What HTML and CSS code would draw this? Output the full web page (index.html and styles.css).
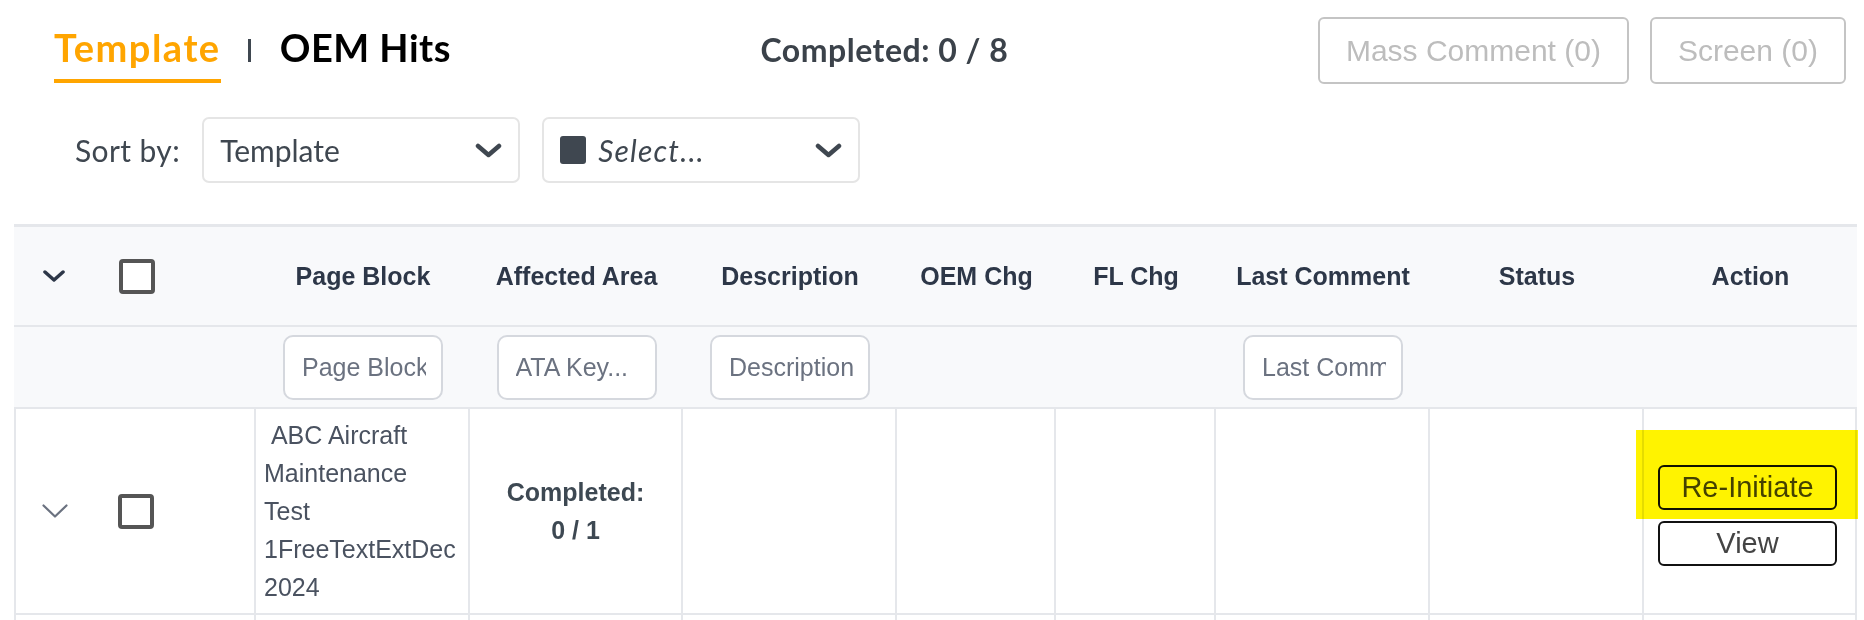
FILE: index.html
```html
<!DOCTYPE html>
<html lang="en">
<head>
<meta charset="utf-8">
<title>Template review</title>
<link rel="stylesheet" href="styles.css">
</head>
<body>
<div class="page">
  <header class="topbar">
    <nav class="tabs">
      <span class="tab tab-active">Template</span>
      <span class="tab-sep" aria-hidden="true"></span>
      <span class="tab tab-plain">OEM Hits</span>
    </nav>
    <div class="progress">Completed: 0 / 8</div>
    <div class="top-actions">
      <button class="btn-ghost" type="button" disabled>Mass Comment (0)</button>
      <button class="btn-ghost" type="button" disabled>Screen (0)</button>
    </div>
  </header>

  <div class="sortbar">
    <span class="sort-label">Sort by:</span>
    <div class="select">
      <span class="select-value">Template</span>
      <svg class="select-caret" viewBox="0 0 27 15" width="27" height="15"><polyline points="3,3 13.5,12 24,3"/></svg>
    </div>
    <div class="select">
      <span class="select-swatch"></span>
      <span class="select-placeholder">Select...</span>
      <svg class="select-caret" viewBox="0 0 27 15" width="27" height="15"><polyline points="3,3 13.5,12 24,3"/></svg>
    </div>
  </div>

  <table class="grid">
    <colgroup>
      <col class="c-ctl">
      <col class="c-wide">
      <col class="c-wide2">
      <col class="c-wide">
      <col class="c-narrow">
      <col class="c-narrow2">
      <col class="c-wide">
      <col class="c-wide">
      <col class="c-wide2">
    </colgroup>
    <thead>
      <tr class="head-row">
        <th class="ctl-head">
          <div class="ctl">
            <svg class="chev-head" viewBox="0 0 22 12" width="22" height="12"><polyline points="2,2 11,10 20,2"/></svg>
            <span class="check"></span>
          </div>
        </th>
        <th>Page Block</th>
        <th>Affected Area</th>
        <th>Description</th>
        <th>OEM Chg</th>
        <th>FL Chg</th>
        <th>Last Comment</th>
        <th>Status</th>
        <th>Action</th>
      </tr>
      <tr class="filter-row">
        <th></th>
        <th><input class="filter" type="text" placeholder="Page Block"></th>
        <th><input class="filter" type="text" placeholder="ATA Key..."></th>
        <th><input class="filter" type="text" placeholder="Description"></th>
        <th></th>
        <th></th>
        <th><input class="filter" type="text" placeholder="Last Comment"></th>
        <th></th>
        <th></th>
      </tr>
    </thead>
    <tbody>
      <tr>
        <td class="ctl-cell">
          <div class="ctl ctl-row">
            <svg class="chev-row" viewBox="0 0 26 14" width="26" height="14"><polyline points="1.5,1.5 13,12.5 24.5,1.5"/></svg>
            <span class="check"></span>
          </div>
        </td>
        <td class="cell-text">&nbsp;ABC Aircraft Maintenance Test 1FreeTextExtDec 2024</td>
        <td class="cell-progress">Completed:<br>0 / 1</td>
        <td></td>
        <td></td>
        <td></td>
        <td></td>
        <td></td>
        <td class="cell-action">
          <div class="action-stack">
            <button class="row-btn" type="button">Re-Initiate</button>
            <button class="row-btn" type="button">View</button>
          </div>
          <span class="highlight" aria-hidden="true"></span>
        </td>
      </tr>
      <tr class="row-next">
        <td></td><td></td><td></td><td></td><td></td><td></td><td></td><td></td><td></td>
      </tr>
    </tbody>
  </table>
</div>
</body>
</html>
```

FILE: styles.css
```css
* { box-sizing: border-box; }

html, body {
  margin: 0;
  background: #fff;
}

body {
  width: 1864px;
  overflow: hidden;
  font-family: "Lato", "Helvetica Neue", Arial, sans-serif;
  color: #3f4750;
}

/* ---------- top bar ---------- */
.topbar {
  display: flex;
  justify-content: space-between;
  align-items: flex-start;
  padding: 17px 18px 0 54px;
}

.tabs {
  display: flex;
  align-items: flex-start;
  margin-top: 7px;
}

.tab {
  font-weight: 700;
  font-size: 38px;
  line-height: 46px;
  color: #000;
  padding-bottom: 9px;
  border-bottom: 4px solid transparent;
}

.tab-active {
  color: #ffa500;
  border-bottom-color: #ffa500;
  letter-spacing: 1.5px;
}

.tab-plain { letter-spacing: 0.5px; }

.tab-sep {
  width: 3px;
  height: 23px;
  background: #3f4750;
  margin: 15px 29px 0 27px;
}

.progress {
  margin-top: 13px;
  font-weight: 700;
  font-size: 32px;
  line-height: 40px;
  letter-spacing: 0.5px;
  color: #3b424a;
}

.top-actions {
  display: flex;
  gap: 21px;
}

.btn-ghost {
  height: 67px;
  padding: 0 26px;
  border: 2px solid #c4c4c4;
  border-radius: 6px;
  background: #fff;
  font-family: "Liberation Sans", Arial, sans-serif;
  font-size: 30px;
  color: #bdbdbd;
}

/* ---------- sort bar ---------- */
.sortbar {
  display: flex;
  align-items: center;
  height: 66px;
  margin-top: 33px;
  padding-left: 75px;
}

.sort-label {
  font-size: 30px;
  letter-spacing: 0.4px;
  margin-right: 22px;
  color: #3f4750;
}

.select {
  display: flex;
  align-items: center;
  width: 318px;
  height: 66px;
  margin-right: 22px;
  padding: 0 16px;
  border: 2px solid #e5e5e5;
  border-radius: 7px;
  background: #fff;
}

.select-value,
.select-placeholder {
  flex: 1;
  font-size: 30px;
  color: #3f4750;
}

.select-placeholder {
  font-style: italic;
  letter-spacing: 1.2px;
}

.select-swatch {
  width: 26px;
  height: 28px;
  margin-right: 12px;
  border-radius: 3px;
  background: #3f4750;
}

.select-caret polyline {
  fill: none;
  stroke: #3f4750;
  stroke-width: 4.5;
  stroke-linecap: round;
  stroke-linejoin: round;
}

/* ---------- table ---------- */
.grid {
  margin: 41px 0 0 14px;
  width: 1843px;
  table-layout: fixed;
  border-collapse: separate;
  border-spacing: 0;
  font-family: "Liberation Sans", Arial, sans-serif;
}

.c-ctl { width: 242px; }
.c-wide { width: 214px; }
.c-wide2 { width: 213px; }
.c-narrow { width: 159px; }
.c-narrow2 { width: 160px; }

thead th {
  background: #f8f9fb;
  padding: 0;
  vertical-align: middle;
}

.head-row th {
  height: 103px;
  border-top: 3px solid #e5e7eb;
  border-bottom: 2px solid #e5e7eb;
  font-weight: 700;
  font-size: 25px;
  color: #2d3748;
  text-align: center;
}

.head-row th.ctl-head {
  text-align: left;
  padding-left: 29px;
}

.ctl {
  display: flex;
  align-items: center;
  gap: 54px;
}

.ctl-row { gap: 50px; }

.chev-head polyline {
  fill: none;
  stroke: #2d3748;
  stroke-width: 3.5;
  stroke-linecap: round;
  stroke-linejoin: round;
}

.chev-row polyline {
  fill: none;
  stroke: #6b7280;
  stroke-width: 2.2;
  stroke-linecap: round;
  stroke-linejoin: round;
}

.check {
  display: inline-block;
  width: 36px;
  height: 35px;
  border: 4px solid #555;
  border-radius: 4px;
  background: #fff;
}

.filter-row th {
  height: 82px;
  border-bottom: 2px solid #e5e7eb;
}

.filter {
  display: block;
  width: 160px;
  height: 65px;
  margin: 0 auto;
  padding: 0 15px 0 17px;
  border: 2px solid #d5d8de;
  border-radius: 10px;
  background: #fff;
  font-family: "Liberation Sans", Arial, sans-serif;
  font-size: 25px;
  color: #374151;
}

.filter::placeholder { color: #6b7280; }

tbody td {
  height: 206px;
  padding: 7px 8px;
  border-right: 2px solid #e5e7eb;
  border-bottom: 2px solid #e5e7eb;
  vertical-align: middle;
  font-size: 25px;
  line-height: 38px;
  color: #4a5260;
}

tbody td:first-child {
  border-left: 2px solid #e5e7eb;
  padding-left: 26px;
}

.cell-text {
  padding-right: 12px;
}

.cell-progress {
  text-align: center;
  font-weight: 700;
  color: #3d4852;
}

.cell-action {
  position: relative;
  padding: 9px 0 0 14px;
}

.action-stack {
  display: flex;
  flex-direction: column;
  gap: 11px;
}

.row-btn {
  width: 179px;
  height: 45px;
  padding: 0;
  border: 2px solid #111;
  border-radius: 6px;
  background: #fff;
  font-family: "Liberation Sans", Arial, sans-serif;
  font-size: 29px;
  line-height: 1;
  color: #444;
}

.highlight {
  position: absolute;
  left: -8px;
  top: 21px;
  width: 222px;
  height: 89px;
  background: #fff300;
  mix-blend-mode: multiply;
  pointer-events: none;
}
```
